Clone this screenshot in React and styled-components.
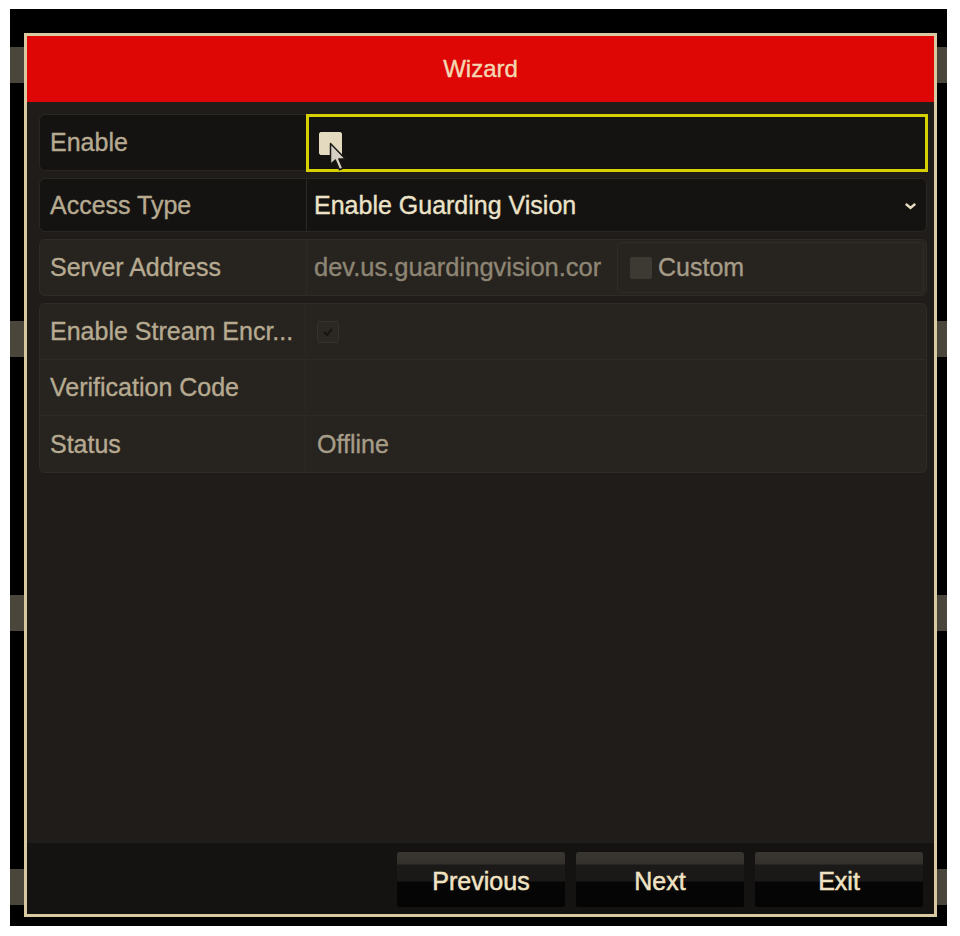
import styled, { createGlobalStyle } from "styled-components"

const GlobalStyle = createGlobalStyle`
    * { box-sizing: border-box; }
    body {
        margin: 0;
        background: #ffffff;
        font-family: "Liberation Sans", Arial, sans-serif;
    }
`

// black monitor area, with the edges of the windows behind the dialog
const Screen = styled.div`
    width: 937px;
    height: 917px;
    margin: 9px 0 0 10px;
    padding: 24px 0 0 14px;
    background-color: #000;
    background-image:
        repeating-linear-gradient(to bottom, transparent 0 38px, #4a463b 38px 74px, transparent 74px 274px),
        repeating-linear-gradient(to bottom, transparent 0 38px, #4a463b 38px 74px, transparent 74px 274px);
    background-size: 14px 100%, 14px 100%;
    background-position: left top, right top;
    background-repeat: no-repeat;
`

const Dialog = styled.div`
    width: 913px;
    height: 884px;
    border: 3px solid #d8c9a0;
    background: #201c19;
    display: flex;
    flex-direction: column;
`

const TitleBar = styled.div`
    height: 66px;
    background: #df0606;
    color: #f3d8b2;
    font-size: 24px;
    -webkit-text-stroke: 0.4px #f3d8b2;
    display: flex;
    align-items: center;
    justify-content: center;
`

const Body = styled.div`
    flex: 1;
    padding: 12px 7px 0 12px;
    display: flex;
    flex-direction: column;
    gap: 7px;
`

const Row = styled.div`
    display: grid;
    grid-template-columns: 266px 1fr;
    height: ${props => props.$h || 56}px;
    border-radius: 6px;
    border: 1px solid ${props => props.$disabled ? "#2f2b26" : "#2a2622"};
    background: ${props => props.$disabled ? "#27231f" : "#151312"};
`

const Group = styled.div`
    border-radius: 6px;
    border: 1px solid #2f2b26;
    background: #27231f;
    display: flex;
    flex-direction: column;
`

const GroupRow = styled.div`
    display: grid;
    grid-template-columns: 265px 1fr;
    height: 56px;
    border-bottom: ${props => props.$last ? "none" : "1px solid #2e2a25"};
`

const Label = styled.div`
    display: flex;
    align-items: center;
    padding-left: 10px;
    color: #b6aa91;
    font-size: 25px;
    -webkit-text-stroke: 0.35px #b6aa91;
    white-space: nowrap;
    overflow: hidden;
`

const Value = styled.div`
    position: relative;
    display: flex;
    align-items: center;
    padding-left: ${props => props.$pad ?? 10}px;
    border-left: 1px solid #2c2824;
    color: ${props => props.$bright ? "#ece3c9" : "#a69d88"};
    -webkit-text-stroke: 0.35px ${props => props.$bright ? "#ece3c9" : "#a69d88"};
    font-size: 25px;
    white-space: nowrap;
    overflow: hidden;
`

const FocusValue = styled(Value)`
    overflow: visible;
    padding-left: 10px;
    margin: -1px -2px -2px 0;
    border: 3px solid #d6d000;
`

const Address = styled.div`
    width: 305px;
    height: 100%;
    display: flex;
    align-items: center;
    padding-left: 7px;
    color: #8e8674;
    -webkit-text-stroke: 0.35px #8e8674;
    font-size: 25.5px;
    white-space: nowrap;
    overflow: hidden;
`

const CustomCell = styled.div`
    flex: 1;
    align-self: stretch;
    margin: 2px 2px 2px 5px;
    border: 1px solid #302c27;
    border-radius: 4px;
    display: flex;
    align-items: center;
    gap: 6px;
    padding-left: 12px;
    color: #a59c88;
    -webkit-text-stroke: 0.35px #a59c88;
    font-size: 25px;
`

const Check = styled.div`
    width: ${props => props.$size || 22}px;
    height: ${props => props.$size || 22}px;
    border-radius: 2px;
    background: ${props => props.$bg};
    border: 1px solid ${props => props.$border || props.$bg};
    display: flex;
    align-items: center;
    justify-content: center;
    flex-shrink: 0;
`

const Chevron = styled.svg`
    position: absolute;
    right: 10px;
    top: 24px;
`

const Cursor = styled.svg`
    position: absolute;
    left: 20px;
    top: 25px;
`

const Footer = styled.div`
    height: 71px;
    background: #151312;
    display: flex;
    justify-content: flex-end;
    align-items: flex-start;
    gap: 11px;
    padding: 9px 11px 0 0;
`

const Button = styled.button`
    width: 168px;
    height: 55px;
    border: none;
    border-radius: 3px 3px 2px 2px;
    background: linear-gradient(to bottom,
        #3a3733 0, #33302d 12px,
        #1c1a19 13px, #1b1918 29px,
        #070606 30px, #040404 100%);
    color: #efe3c4;
    -webkit-text-stroke: 0.5px #efe3c4;
    font-family: "Liberation Sans", Arial, sans-serif;
    font-size: 25px;
    padding: 4px 0 0;
    cursor: pointer;
`

const App = () => {
    return (
        <>
            <GlobalStyle />
            <Screen>
                <Dialog>
                    <TitleBar>Wizard</TitleBar>
                    <Body>
                        <Row $h={57}>
                            <Label>Enable</Label>
                            <FocusValue>
                                <Check $bg="#e4dac0" $size={23} />
                                <Cursor width="18" height="30" viewBox="0 0 12 20">
                                    <path d="M1 1 L1 15 L4.2 12 L7 18.5 L9.2 17.5 L6.6 11.3 L11 11.3 Z"
                                        fill="#d6d0c4" stroke="#1a1714" strokeWidth="1" strokeLinejoin="round" />
                                </Cursor>
                            </FocusValue>
                        </Row>
                        <Row $h={54}>
                            <Label>Access Type</Label>
                            <Value $bright $pad={7}>
                                Enable Guarding Vision
                                <Chevron width="11" height="7" viewBox="0 0 11 7">
                                    <polyline points="1.5,1.5 5.5,5 9.5,1.5" fill="none" stroke="#e6dcc2" strokeWidth="2.4" strokeLinecap="round" />
                                </Chevron>
                            </Value>
                        </Row>
                        <Row $h={57} $disabled>
                            <Label>Server Address</Label>
                            <Value $pad={0}>
                                <Address>dev.us.guardingvision.cor</Address>
                                <CustomCell>
                                    <Check $bg="#3d3933" />
                                    Custom
                                </CustomCell>
                            </Value>
                        </Row>
                        <Group>
                            <GroupRow>
                                <Label>Enable Stream Encr...</Label>
                                <Value $pad={11}>
                                    <Check $bg="#2b2824" $border="#35312c">
                                        <svg width="12" height="10" viewBox="0 0 12 10">
                                            <polyline points="2,5 5,8 10,2" fill="none" stroke="#171513" strokeWidth="2" />
                                        </svg>
                                    </Check>
                                </Value>
                            </GroupRow>
                            <GroupRow>
                                <Label>Verification Code</Label>
                                <Value />
                            </GroupRow>
                            <GroupRow $last>
                                <Label>Status</Label>
                                <Value $pad={11}>Offline</Value>
                            </GroupRow>
                        </Group>
                    </Body>
                    <Footer>
                        <Button>Previous</Button>
                        <Button>Next</Button>
                        <Button>Exit</Button>
                    </Footer>
                </Dialog>
            </Screen>
        </>
    )
}

export default App
